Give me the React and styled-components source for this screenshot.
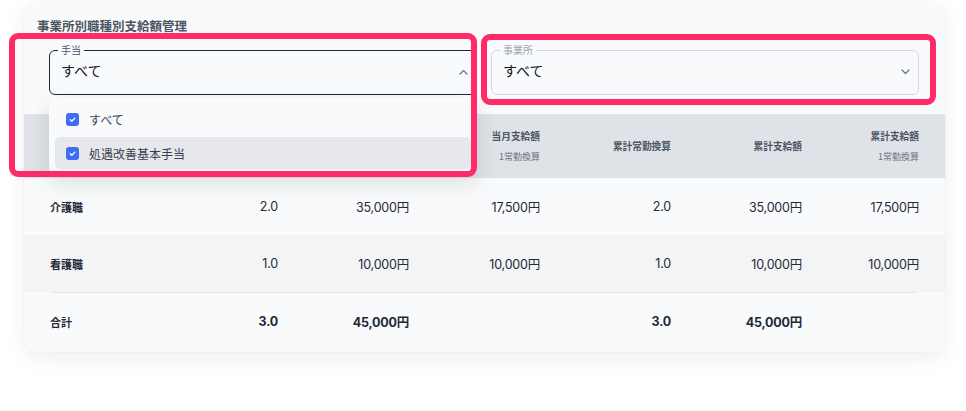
import styled, { createGlobalStyle } from "styled-components";

const GlobalStyle = createGlobalStyle`
  body {
    margin: 0;
    background: #ffffff;
    font-family: "Inter", "Noto Sans CJK JP", sans-serif;
    color: #1f2937;
  }
`;

const rows = [
  { name: "介護職", values: ["2.0", "35,000円", "17,500円", "2.0", "35,000円", "17,500円"] },
  { name: "看護職", values: ["1.0", "10,000円", "10,000円", "1.0", "10,000円", "10,000円"] },
];

const total = { name: "合計", values: ["3.0", "45,000円", "", "3.0", "45,000円", ""] };

const headers = [
  { title: "常勤換算" },
  { title: "当月支給額" },
  { title: "当月支給額", sub: "1常勤換算" },
  { title: "累計常勤換算" },
  { title: "累計支給額" },
  { title: "累計支給額", sub: "1常勤換算" },
];

const Chevron = ({ up }) => (
  <Icon>
    <svg width="9" height="6" viewBox="0 0 9 6" fill="none">
      <path
        d={up ? "M1 5L4.5 1.5L8 5" : "M1 1L4.5 4.5L8 1"}
        stroke="#6b7280"
        strokeWidth="1.2"
        strokeLinecap="round"
        strokeLinejoin="round"
      />
    </svg>
  </Icon>
);

const Check = () => (
  <svg width="9" height="9" viewBox="0 0 10 10" fill="none">
    <path d="M2.5 5.2L4.3 7L7.6 3.4" stroke="#fff" strokeWidth="1.4" strokeLinecap="round" strokeLinejoin="round" />
  </svg>
);

const App = () => {
  return (
    <Page>
      <GlobalStyle />
      <Card>
        <Title>事業所別職種別支給額管理</Title>
        <Filters>
          <SelectWrap>
            <Select $focused>
              <Label $focused>手当</Label>
              <Value>すべて</Value>
              <Chevron up />
            </Select>
            <Menu>
              <MenuItem>
                <Box>
                  <Check />
                </Box>
                すべて
              </MenuItem>
              <MenuItem $active>
                <Box>
                  <Check />
                </Box>
                処遇改善基本手当
              </MenuItem>
            </Menu>
          </SelectWrap>
          <SelectWrap>
            <Select>
              <Label>事業所</Label>
              <Value>すべて</Value>
              <Chevron />
            </Select>
          </SelectWrap>
        </Filters>
        <Table>
          <HeadRow>
            <HeadCell $left>職種</HeadCell>
            {headers.map((h, i) => (
              <HeadCell key={i}>
                <span>{h.title}</span>
                {h.sub && <Sub>{h.sub}</Sub>}
              </HeadCell>
            ))}
          </HeadRow>
          {rows.map((r, i) => (
            <Row key={r.name} $striped={i % 2 === 1}>
              <NameCell>{r.name}</NameCell>
              {r.values.map((v, j) => (
                <Cell key={j}>{v}</Cell>
              ))}
            </Row>
          ))}
          <Divider />
          <Row $bold>
            <NameCell>{total.name}</NameCell>
            {total.values.map((v, j) => (
              <Cell key={j}>{v}</Cell>
            ))}
          </Row>
        </Table>
      </Card>
      <Highlight $left={9} $top={33} $w={468} $h={144} />
      <Highlight $left={481} $top={34} $w={455} $h={71} />
    </Page>
  );
};

const Page = styled.div`
  position: relative;
  padding: 3px 21px 0 24px;
  height: 411px;
  box-sizing: border-box;
`;

const Card = styled.div`
  width: 921px;
  height: 349px;
  background: #f9fafb;
  border-radius: 14px;
  box-shadow: 0 6px 22px rgba(17, 24, 39, 0.07), 0 0 0 1px rgba(17, 24, 39, 0.015);
  box-sizing: border-box;
  padding-top: 14px;
  overflow: hidden;
  position: relative;
`;

const Title = styled.div`
  padding: 0 13px;
  font-size: 12.5px;
  line-height: 18px;
  font-weight: 700;
  color: #4b5563;
  font-family: "Noto Sans CJK JP", sans-serif;
`;

const Filters = styled.div`
  display: grid;
  grid-template-columns: 1fr 1fr;
  gap: 14px;
  padding: 0 26px 0 25px;
  margin-top: 15px;
  position: relative;
  z-index: 2;
`;

const SelectWrap = styled.div`
  position: relative;
`;

const Select = styled.div`
  position: relative;
  height: 45px;
  box-sizing: border-box;
  border: 1px solid ${(p) => (p.$focused ? "#1f2937" : "#d6d9df")};
  border-radius: 6px;
  display: flex;
  align-items: center;
  justify-content: space-between;
  padding: 0 8px 0 11px;
`;

const Icon = styled.span`
  display: flex;
  margin-top: -2px;
`;

const Label = styled.span`
  position: absolute;
  top: -7px;
  left: 8px;
  padding: 0 3px;
  background: #f9fafb;
  font-size: 10px;
  line-height: 12px;
  color: ${(p) => (p.$focused ? "#4b5563" : "#9ca3af")};
  font-family: "Noto Sans CJK JP", sans-serif;
`;

const Value = styled.span`
  font-size: 14px;
  color: #111827;
  font-family: "Noto Sans CJK JP", sans-serif;
  margin-top: -5px;
`;

const Menu = styled.div`
  position: absolute;
  top: calc(100% + 2px);
  left: 0;
  right: 0;
  background: #f9fafb;
  border-radius: 6px;
  box-shadow: 0 8px 22px rgba(17, 24, 39, 0.12);
  padding: 6px 6px;
  display: flex;
  flex-direction: column;
  gap: 2px;
`;

const MenuItem = styled.div`
  height: 32px;
  display: flex;
  align-items: center;
  gap: 10px;
  padding-left: 11px;
  border-radius: 5px;
  background: ${(p) => (p.$active ? "#e6e8ec" : "transparent")};
  font-size: 12px;
  color: #374151;
  font-family: "Noto Sans CJK JP", sans-serif;
`;

const Box = styled.span`
  width: 13px;
  height: 13px;
  border-radius: 3px;
  background: #3d6ef5;
  display: flex;
  align-items: center;
  justify-content: center;
`;

const Table = styled.div`
  margin-top: 19px;
`;

const grid = `
  display: grid;
  grid-template-columns: 97px repeat(5, 131px) 1fr;
  padding: 0 26px;
  align-items: center;
`;

const HeadRow = styled.div`
  ${grid}
  height: 64px;
  background: #dfe2e7;
`;

const HeadCell = styled.div`
  display: flex;
  flex-direction: column;
  align-items: ${(p) => (p.$left ? "flex-start" : "flex-end")};
  gap: 7px;
  font-size: 9.7px;
  font-weight: 700;
  color: #4b5563;
  font-family: "Noto Sans CJK JP", sans-serif;
`;

const Sub = styled.span`
  font-size: 9px;
  font-weight: 400;
  color: #6b7280;
`;

const Row = styled.div`
  ${grid}
  height: 57px;
  background: ${(p) => (p.$striped ? "#f3f4f6" : "transparent")};
  font-weight: ${(p) => (p.$bold ? 700 : 400)};
`;

const NameCell = styled.div`
  font-size: 11px;
  font-weight: 700;
  color: #1f2937;
  font-family: "Noto Sans CJK JP", sans-serif;
`;

const Cell = styled.div`
  text-align: right;
  font-size: 12.5px;
  color: #1f2937;
  letter-spacing: -0.2px;
`;

const Divider = styled.div`
  height: 1px;
  margin: 0 28px;
  background: #e0e2e6;
`;

const Highlight = styled.div`
  position: absolute;
  left: ${(p) => p.$left}px;
  top: ${(p) => p.$top}px;
  width: ${(p) => p.$w}px;
  height: ${(p) => p.$h}px;
  box-sizing: border-box;
  border: 6px solid #ff2b68;
  border-radius: 9px;
  pointer-events: none;
  z-index: 5;
`;

export default App;
